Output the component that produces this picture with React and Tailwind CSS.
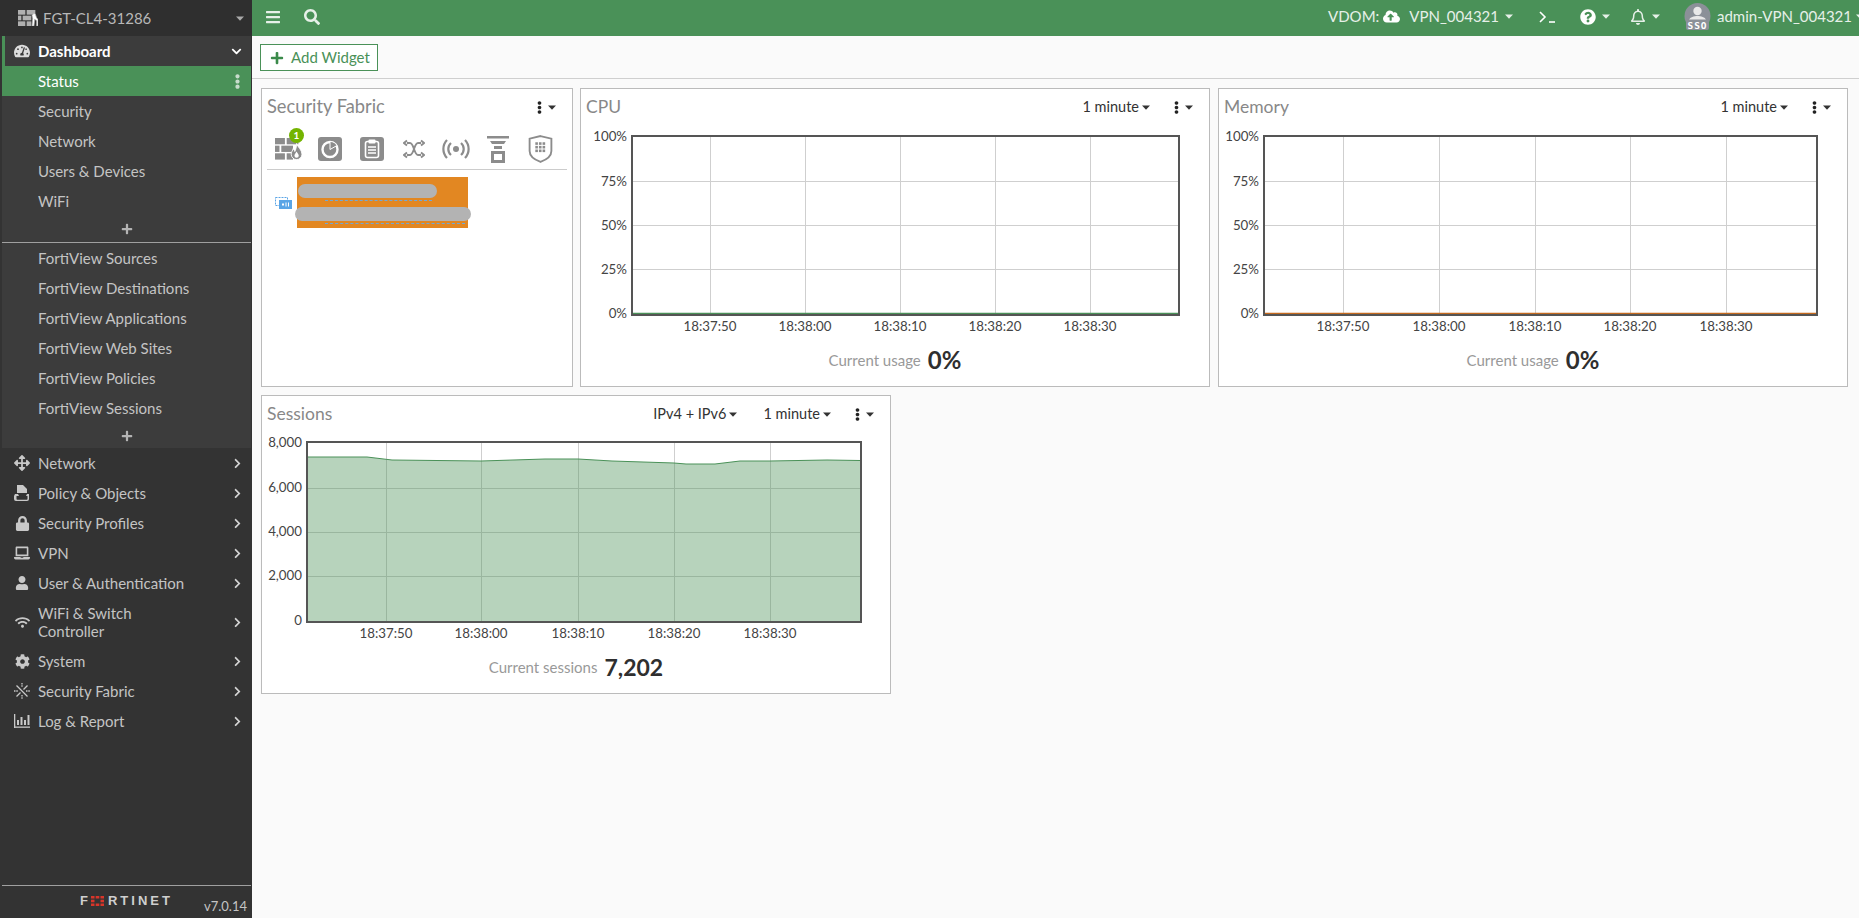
import React from "react";
import {
  FaTachometerAlt, FaArrowsAlt, FaLock, FaLaptop, FaUser, FaWifi, FaCog, FaChevronRight, FaChevronDown,
  FaBars, FaSearch, FaCloudUploadAlt, FaQuestionCircle, FaRegBell, FaEllipsisV, FaPlus,
} from "react-icons/fa";

const GREEN = "#4a9158";

function Caret({ className = "", color = "currentColor" }) {
  return (
    <svg width="8" height="5" viewBox="0 0 8 5" className={className}>
      <path d="M0 0.5h8L4 4.8z" fill={color} />
    </svg>
  );
}

function FirewallIcon({ size = 24, color = "#8c8c8c", flame = true, figure = false }) {
  return (
    <svg width={size} height={size * 0.8} viewBox="0 0 30 24" fill={color}>
      <rect x="0" y="0" width="11" height="7" />
      <rect x="13" y="0" width="13" height="7" />
      <rect x="0" y="8.500" width="5" height="7" />
      <rect x="7" y="8.500" width="13" height="7" />
      <rect x="0" y="17" width="11" height="7" />
      <rect x="13" y="17" width="7" height="7" />
      {flame && <path fill="#8c8c8c" stroke="#fff" strokeWidth="1" d="M24 6c1 4 6 7 6 12a6 6 0 0 1-12 0c0-3 2-4 2-6 1 1 2 2 2 3 1-2 2-5 2-9z" />}
      {flame && <path fill="#fff" d="M24 15c1 2 2.400 3 2.400 4.600a2.400 2.400 0 0 1-4.800 0c0-1.200 1-2.400 2.400-4.600z" />}
      {figure && <path fill="#fff" stroke={color} d="M21 8l3-3 2 1 2 6 2 2v10h-2v-8l-3-2-1 10h-3l1-11z" />}
    </svg>
  );
}

function PolicyIcon() {
  return (
    <svg width="16" height="16" viewBox="0 0 16 16" fill="#c8c8c8">
      <path d="M3 0h6l4 4v4H3z" />
      <path d="M1 9h3l1 2h7l1-2h2v5a2 2 0 0 1-2 2H2a2 2 0 0 1-2-2v-3z" />
      <path d="M2.500 11h11v3a.7.7 0 0 1-.7.7H3.200a.7.7 0 0 1-.7-.7z" fill="#333" />
    </svg>
  );
}

function FabricIcon() {
  return (
    <svg width="16" height="16" viewBox="0 0 16 16" stroke="#c8c8c8" strokeWidth="1.300" fill="none">
      <path d="M8 0v4M8 12v4M0 8h4M12 8h4" strokeDasharray="1.500 .8" />
      <path d="M2.500 2.500l11 11M13.500 2.500l-4 4M6.500 9.500l-4 4" />
    </svg>
  );
}

function LogIcon() {
  return (
    <svg width="16" height="14" viewBox="0 0 16 14" fill="#c8c8c8">
      <rect x="0" y="0" width="1.300" height="14" />
      <rect x="0" y="12.500" width="16" height="1.300" />
      <rect x="3" y="6" width="2" height="5" />
      <rect x="6.500" y="3" width="2" height="8" />
      <rect x="10" y="6" width="2" height="5" />
      <rect x="13.500" y="1" width="2" height="10" />
    </svg>
  );
}

function SideRow({ icon, label, tall }) {
  return (
    <div className={`flex items-center pr-[9px] text-[#c4c4c4] ${tall ? "h-[48px]" : "h-[30px]"}`}>
      <span className="flex w-[38px] shrink-0 items-center justify-center pl-[6px] text-[#c8c8c8]">{icon}</span>
      <span className="flex-1 leading-[18px]">{label}</span>
      <FaChevronRight className="text-[11px] text-[#d4d4d4]" />
    </div>
  );
}

function SubRow({ label }) {
  return <div className="flex h-[30px] items-center pl-[36px] text-[#c4c4c4]">{label}</div>;
}

function Sidebar() {
  return (
    <aside className="flex h-full w-[252px] shrink-0 flex-col bg-[#333333] text-[15px]">
      <div className="flex h-[36px] items-center bg-[#2f2f2f] pl-[18px] pr-[8px] text-[15px] text-[#b8b8b8]">
        <FirewallIcon size={20} color="#b0b0b0" flame={false} figure />
        <span className="ml-[5px] flex-1">FGT-CL4-31286</span>
        <Caret color="#aaaaaa" />
      </div>
      <div className="ml-[2px] mr-[1px] bg-[#3c3c3c]">
        <div className="flex h-[30px] items-center border-l-[3px] border-[#4a9158] pr-[9px] font-bold text-white">
          <FaTachometerAlt className="ml-[9px] mr-[8px] text-[16px] text-[#dddddd]" />
          <span className="flex-1">Dashboard</span>
          <FaChevronDown className="text-[11px]" />
        </div>
        <div className="flex h-[30px] items-center justify-between pl-[36px] pr-[6px] text-white" style={{ backgroundColor: GREEN }}>
          <span>Status</span>
          <FaEllipsisV className="text-[15px] text-[#c8dccc]" />
        </div>
        <SubRow label="Security" />
        <SubRow label="Network" />
        <SubRow label="Users & Devices" />
        <SubRow label="WiFi" />
        <div className="flex h-[26px] items-center justify-center"><FaPlus className="text-[12px] text-[#b4b4b4]" /></div>
        <div className="h-px bg-[#a0a0a0]" />
        <SubRow label="FortiView Sources" />
        <SubRow label="FortiView Destinations" />
        <SubRow label="FortiView Applications" />
        <SubRow label="FortiView Web Sites" />
        <SubRow label="FortiView Policies" />
        <SubRow label="FortiView Sessions" />
        <div className="flex h-[25px] items-center justify-center"><FaPlus className="text-[12px] text-[#b4b4b4]" /></div>
      </div>
      <SideRow icon={<FaArrowsAlt className="text-[16px]" />} label="Network" />
      <SideRow icon={<PolicyIcon />} label="Policy & Objects" />
      <SideRow icon={<FaLock className="text-[15px]" />} label="Security Profiles" />
      <SideRow icon={<FaLaptop className="text-[16px]" />} label="VPN" />
      <SideRow icon={<FaUser className="text-[14px]" />} label="User & Authentication" />
      <SideRow icon={<FaWifi className="text-[15px]" />} label={<>WiFi & Switch<br />Controller</>} tall />
      <SideRow icon={<FaCog className="text-[15px]" />} label="System" />
      <SideRow icon={<FabricIcon />} label="Security Fabric" />
      <SideRow icon={<LogIcon />} label="Log & Report" />
      <div className="mt-auto ml-[2px] mr-[1px] flex h-[33px] items-center border-t border-[#a0a0a0] pl-[78px] pr-[4px]">
        <div className="mt-[-3px] flex items-center font-['Liberation_Sans',sans-serif] text-[13px] font-bold tracking-[3px] text-[#cfcfcf]">
          <span>F</span>
          <svg width="13" height="10" viewBox="0 0 13 10" className="mr-[4px]" fill="#d8352a">
            <rect x="0" y="0" width="3.500" height="2.500" /><rect x="4.700" y="0" width="3.600" height="2.500" /><rect x="9.500" y="0" width="3.500" height="2.500" />
            <rect x="0" y="3.700" width="3.500" height="2.600" /><rect x="9.500" y="3.700" width="3.500" height="2.600" />
            <rect x="0" y="7.500" width="3.500" height="2.500" /><rect x="4.700" y="7.500" width="3.600" height="2.500" /><rect x="9.500" y="7.500" width="3.500" height="2.500" />
          </svg>
          <span>RTINET</span>
        </div>
        <span className="ml-auto mt-[10px] text-[13px] text-[#c4c4c4]">v7.0.14</span>
      </div>
    </aside>
  );
}

function Avatar() {
  return (
    <svg width="27" height="27" viewBox="0 0 27 27">
      <circle cx="13.500" cy="13" r="13" fill="#8b9098" />
      <circle cx="13.500" cy="8" r="4.200" fill="#e8e8e8" />
      <path d="M5 17c1-3 5-4 8.500-4s7.500 1 8.500 4z" fill="#e8e8e8" />
      <rect x="2" y="16.500" width="23" height="10.500" rx="2" fill="#8b9098" />
      <text x="13.500" y="25.500" textAnchor="middle" fontSize="9.500" fontWeight="700" letterSpacing="1" fill="#ffffff" fontFamily="'DejaVu Sans Mono',monospace">SSO</text>
    </svg>
  );
}

function TopBar() {
  return (
    <header className="flex h-[36px] shrink-0 items-center pb-[3px] pl-[13px] text-[15px] text-[#e6f0e8]" style={{ backgroundColor: GREEN }}>
      <FaBars className="text-[16px]" />
      <FaSearch className="ml-[23px] text-[16px]" />
      <div className="ml-auto flex items-center">
        <span>VDOM:</span>
        <FaCloudUploadAlt className="ml-[4px] text-[17px] text-white" />
        <span className="ml-[9px]">VPN_004321</span>
        <Caret className="ml-[6px]" />
        <svg width="17" height="12" viewBox="0 0 17 12" className="ml-[26px]" fill="none" stroke="#fff" strokeWidth="1.600"><path d="M1 1l5 5-5 5" /><path d="M10 11h6" /></svg>
        <FaQuestionCircle className="ml-[24px] text-[16px] text-white" />
        <Caret className="ml-[6px]" />
        <FaRegBell className="ml-[20px] text-[16px]" />
        <Caret className="ml-[6px]" />
        <span className="ml-[24px] flex items-center"><Avatar /></span>
        <span className="ml-[6px]">admin-VPN_004321</span>
        <Caret className="ml-[4px] mr-[-5px]" />
      </div>
    </header>
  );
}

function WidgetHeader({ title, controls = [], titleClass = "text-[17.500px]" }) {
  return (
    <div className="flex h-[36px] shrink-0 items-center pl-[5px] pr-[16px]">
      <span className={`flex-1 text-[#888888] ${titleClass}`}>{title}</span>
      {controls.length > 0 && (
        <div className="mr-[20px] flex items-center gap-[26px]">
          {controls.map((c) => (
            <span key={c} className="flex items-center text-[14.500px] text-[#333333]">
              {c}<Caret className="ml-[3px]" color="#333333" />
            </span>
          ))}
        </div>
      )}
      <span className="flex items-center text-[#222222]">
        <FaEllipsisV className="text-[13px]" />
        <Caret className="ml-[2px]" color="#333333" />
      </span>
    </div>
  );
}

function Chart({ width, height = 215, left, right, top, bottom, xs, ys, xLabels, yLabels, children, tickY }) {
  return (
    <svg width={width} height={height} className="block shrink-0" fontFamily="Lato, sans-serif" fontSize="13.300">
      {ys.map((y) => <line key={y} x1={left} x2={right} y1={y + 0.5} y2={y + 0.5} stroke="#cfcfcf" />)}
      {xs.map((x) => <line key={x} x1={x + 0.5} x2={x + 0.5} y1={top} y2={bottom} stroke="#cfcfcf" />)}
      {children}
      <rect x={left} y={top} width={right - left} height={bottom - top} fill="none" stroke="#555555" strokeWidth="2" />
      {yLabels.map(([t, y]) => <text key={t} x={left - 5} y={y + 4.500} textAnchor="end" fill="#444444">{t}</text>)}
      {xs.map((x, i) => <text key={x} x={x} y={tickY} textAnchor="middle" fill="#444444">{xLabels[i]}</text>)}
    </svg>
  );
}

const TIMES = ["18:37:50", "18:38:00", "18:38:10", "18:38:20", "18:38:30"];

function Footer({ label, value, valueClass = "text-[24px]" }) {
  return (
    <div className="flex h-[40px] items-center justify-center gap-[7px]">
      <span className="text-[15px] text-[#999999]">{label}</span>
      <span className={`font-bold text-[#2f2f2f] ${valueClass}`}>{value}</span>
    </div>
  );
}

function UsageWidget({ title, left, right, xs, color }) {
  return (
    <section className="h-[299px] w-[630px] shrink-0 border border-[#bbbbbb] bg-white">
      <WidgetHeader title={title} controls={["1 minute"]} />
      <Chart
        width={628}
        left={left}
        right={right}
        top={11}
        bottom={190}
        xs={xs}
        ys={[56, 100, 144]}
        xLabels={TIMES}
        tickY={206}
        yLabels={[["100%", 11], ["75%", 56], ["50%", 100], ["25%", 144], ["0%", 188]]}
      >
        <line x1={left} x2={right} y1="188.500" y2="188.500" stroke={color} strokeWidth="1.500" />
      </Chart>
      <Footer label="Current usage" value="0%" />
    </section>
  );
}

function FabricGlyph({ kind }) {
  const c = "#8c8c8c";
  if (kind === "analyzer") {
    return (
      <svg width="24" height="24" viewBox="0 0 24 24">
        <rect width="24" height="24" rx="3" fill={c} />
        <circle cx="12" cy="12.500" r="7.500" fill="none" stroke="#fff" strokeWidth="2.400" />
        <path d="M12 12.500V4.500a8 8 0 0 1 7 4z" fill={c} stroke="#fff" strokeWidth="1" />
      </svg>
    );
  }
  if (kind === "clipboard") {
    return (
      <svg width="24" height="24" viewBox="0 0 24 24">
        <rect width="24" height="24" rx="3" fill={c} />
        <rect x="5.500" y="4.500" width="13" height="16" rx="2" fill="none" stroke="#fff" strokeWidth="1.600" />
        <rect x="8.500" y="2.500" width="7" height="4" rx="1" fill="#fff" />
        <path d="M8 10h8M8 13h8M8 16h8" stroke="#fff" strokeWidth="1.500" />
      </svg>
    );
  }
  if (kind === "shuffle") {
    return (
      <svg width="22" height="20" viewBox="0 0 22 20" fill="none" stroke={c} strokeWidth="1.900">
        <path d="M4 4h3c4 0 4 12 8 12h3M4 16h3c4 0 4-12 8-12h3" />
        <path d="M18 1.500l3 2.500-3 2.500M18 13.500l3 2.500-3 2.500M4 1.500L1 4l3 2.500M4 13.500L1 16l3 2.500" />
      </svg>
    );
  }
  if (kind === "broadcast") {
    return (
      <svg width="28" height="24" viewBox="0 0 28 24" fill="none" stroke={c} strokeWidth="2.200">
        <circle cx="14" cy="12" r="3" fill={c} stroke="none" />
        <path d="M9 6a8 8 0 0 0 0 12M19 6a8 8 0 0 1 0 12M5 3a13 13 0 0 0 0 18M23 3a13 13 0 0 1 0 18" />
      </svg>
    );
  }
  if (kind === "filter") {
    return (
      <svg width="22" height="27" viewBox="0 0 22 27" fill={c}>
        <rect x="0" y="0" width="22" height="2.500" />
        <path d="M3 5h16l-2 3H5z" />
        <path d="M7 10h8v3H7z" />
        <path fillRule="evenodd" d="M4 15h14v12H4zM7 18v6h8v-6z" />
      </svg>
    );
  }
  return (
    <svg width="25" height="28" viewBox="0 0 24 27">
      <path d="M12 1l10.500 2.500v12c0 5-5 8.500-10.500 10.500C6.500 24 1.500 20.500 1.500 15.500v-12z" fill="none" stroke={c} strokeWidth="1.800" />
      <g fill={c}>
        {[7, 10.500, 14].map((y) => [7, 10.500, 14].map((x) => <rect key={`${x}-${y}`} x={x} y={y} width="2.500" height="2.500" />))}
      </g>
    </svg>
  );
}

function SecurityFabric() {
  return (
    <section className="h-[299px] w-[312px] shrink-0 border border-[#bbbbbb] bg-white">
      <WidgetHeader title="Security Fabric" titleClass="text-[18.300px] leading-[24px] mt-[-2px]" />
      <div className="mx-[5px] flex h-[45px] items-center border-b border-[#cccccc] pt-[4px]">
        <span className="relative flex w-[42px] justify-center">
          <FirewallIcon size={27} />
          <span className="absolute left-[22px] top-[-10px] flex h-[15px] w-[15px] items-center justify-center rounded-full bg-[#74b400] text-[10px] font-bold text-white">1</span>
        </span>
        <span className="flex w-[42px] justify-center"><FabricGlyph kind="analyzer" /></span>
        <span className="flex w-[42px] justify-center"><FabricGlyph kind="clipboard" /></span>
        <span className="flex w-[42px] justify-center"><FabricGlyph kind="shuffle" /></span>
        <span className="flex w-[42px] justify-center"><FabricGlyph kind="broadcast" /></span>
        <span className="flex w-[42px] justify-center"><FabricGlyph kind="filter" /></span>
        <span className="flex w-[42px] justify-center"><FabricGlyph kind="shield" /></span>
      </div>
      <div className="mt-[7px] flex items-center pl-[13px]">
        <svg width="17" height="13" viewBox="0 0 17 13" className="mt-[2px]">
          <rect x="0.500" y="0.500" width="12" height="8" fill="none" stroke="#5aa5e6" strokeDasharray="2 1" />
          <rect x="4" y="3" width="13" height="9" fill="#5aa5e6" />
          <rect x="7" y="6.500" width="2" height="2" fill="#fff" />
          <path d="M11 5.500v4M13.500 5.500v4" stroke="#fff" />
        </svg>
        <div className="relative ml-[5px] h-[51px] w-[171px] bg-[#e28722]">
          <div className="absolute left-[28px] top-[23px] h-0 w-[107px] border-t border-dashed border-[#6fa8d8]" />
          <div className="absolute left-[28px] top-[46px] h-0 w-[140px] border-t border-dashed border-[#6fa8d8]" />
          <div className="absolute left-[1px] top-[7px] h-[14px] w-[139px] rounded-full bg-[#b3b3b3]" />
          <div className="absolute left-[-2px] top-[30px] h-[14px] w-[176px] rounded-full bg-[#b3b3b3]" />
        </div>
      </div>
    </section>
  );
}

function SessionsWidget() {
  const pts = "46,25 105,25 130,28 219,29 283,27 316,27 350,29 412,31 424,32 453,32 478,29 508,29 565,28 598,28.500";
  return (
    <section className="h-[299px] w-[630px] border border-[#bbbbbb] bg-white">
      <WidgetHeader title="Sessions" controls={["IPv4 + IPv6", "1 minute"]} />
      <Chart
        width={628}
        left={45}
        right={599}
        top={10}
        bottom={190}
        xs={[124, 219, 316, 412, 508]}
        ys={[56, 100, 144]}
        xLabels={TIMES}
        tickY={206}
        yLabels={[["8,000", 10], ["6,000", 55], ["4,000", 99], ["2,000", 143], ["0", 188]]}
      >
        <polygon points={`${pts} 598,190 46,190`} fill="#4a9158" fillOpacity="0.4" />
        <polyline points={pts} fill="none" stroke="#4a9158" strokeWidth="1" />
      </Chart>
      <Footer label="Current sessions" value="7,202" valueClass="text-[23px]" />
    </section>
  );
}

export default function App() {
  return (
    <div className="flex h-screen w-full overflow-hidden bg-[#fafafa] font-['Lato','Noto_Sans',sans-serif]">
      <Sidebar />
      <main className="flex min-w-0 flex-1 flex-col">
        <TopBar />
        <div className="flex h-[43px] shrink-0 items-start border-b border-[#cfcfcf] pl-[8px] pt-[8px]">
          <button className="flex h-[27px] w-[118px] items-center border border-[#4a9158] bg-white pl-[9px] text-[15px] text-[#4a9158]">
            <FaPlus className="mr-[7px] text-[14px] text-[#3a8a4a]" />
            Add Widget
          </button>
        </div>
        <div className="flex flex-col gap-[8px] pl-[9px] pr-[11px] pt-[9px]">
          <div className="flex gap-[7px]">
            <SecurityFabric />
            <UsageWidget title="CPU" left={51} right={598} xs={[129, 224, 319, 414, 509]} color="#4a9158" />
            <div className="ml-[1px]">
              <UsageWidget title="Memory" left={45} right={598} xs={[124, 220, 316, 411, 507]} color="#c46a1e" />
            </div>
          </div>
          <SessionsWidget />
        </div>
      </main>
    </div>
  );
}
